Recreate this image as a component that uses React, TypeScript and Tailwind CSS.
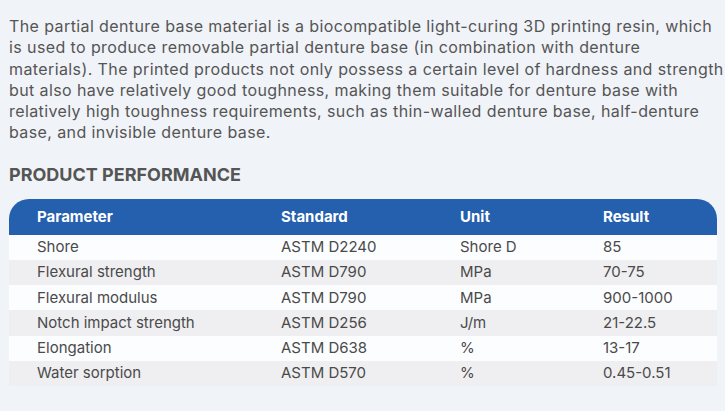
const rows = [
  { param: "Shore", standard: "ASTM D2240", unit: "Shore D", result: "85" },
  { param: "Flexural strength", standard: "ASTM D790", unit: "MPa", result: "70-75" },
  { param: "Flexural modulus", standard: "ASTM D790", unit: "MPa", result: "900-1000" },
  { param: "Notch impact strength", standard: "ASTM D256", unit: "J/m", result: "21-22.5" },
  { param: "Elongation", standard: "ASTM D638", unit: "%", result: "13-17" },
  { param: "Water sorption", standard: "ASTM D570", unit: "%", result: "0.45-0.51" },
];

export default function App() {
  return (
    <div className="min-h-screen bg-[#f0f3f8] pl-[9px] pr-[8px] pt-[16px] font-['Inter',sans-serif] text-[#555]">
      {/* Intro */}
      <p className="whitespace-nowrap text-[16px] leading-[21.3px] tracking-[0.4px]">
        The partial denture base material is a biocompatible light-curing 3D printing resin, which
        <br />
        is used to produce removable partial denture base (in combination with denture
        <br />
        materials). The printed products not only possess a certain level of hardness and strength
        <br />
        but also have relatively good toughness, making them suitable for denture base with
        <br />
        relatively high toughness requirements, such as thin-walled denture base, half-denture
        <br />
        base, and invisible denture base.
      </p>

      <h2 className="mt-[19px] text-[18px] font-bold leading-[24px] text-[#555]">
        PRODUCT PERFORMANCE
      </h2>

      {/* Table */}
      <table className="mt-[12px] w-full border-collapse overflow-hidden rounded-t-[20px] text-[15px] text-[#4a4a4a]">
        <thead>
          <tr className="h-[36px] bg-[#2560ae] text-left text-white">
            <th className="w-[272px] pl-[28px] font-bold">Parameter</th>
            <th className="w-[179px] font-bold">Standard</th>
            <th className="w-[143px] font-bold">Unit</th>
            <th className="font-bold">Result</th>
          </tr>
        </thead>
        <tbody>
          {rows.map((r, i) => (
            <tr key={r.param} className={`h-[25.2px] ${i % 2 === 0 ? "bg-[#fcfdff]" : "bg-[#efeff1]"}`}>
              <td className="pl-[28px]">{r.param}</td>
              <td>{r.standard}</td>
              <td>{r.unit}</td>
              <td>{r.result}</td>
            </tr>
          ))}
        </tbody>
      </table>
    </div>
  );
}
